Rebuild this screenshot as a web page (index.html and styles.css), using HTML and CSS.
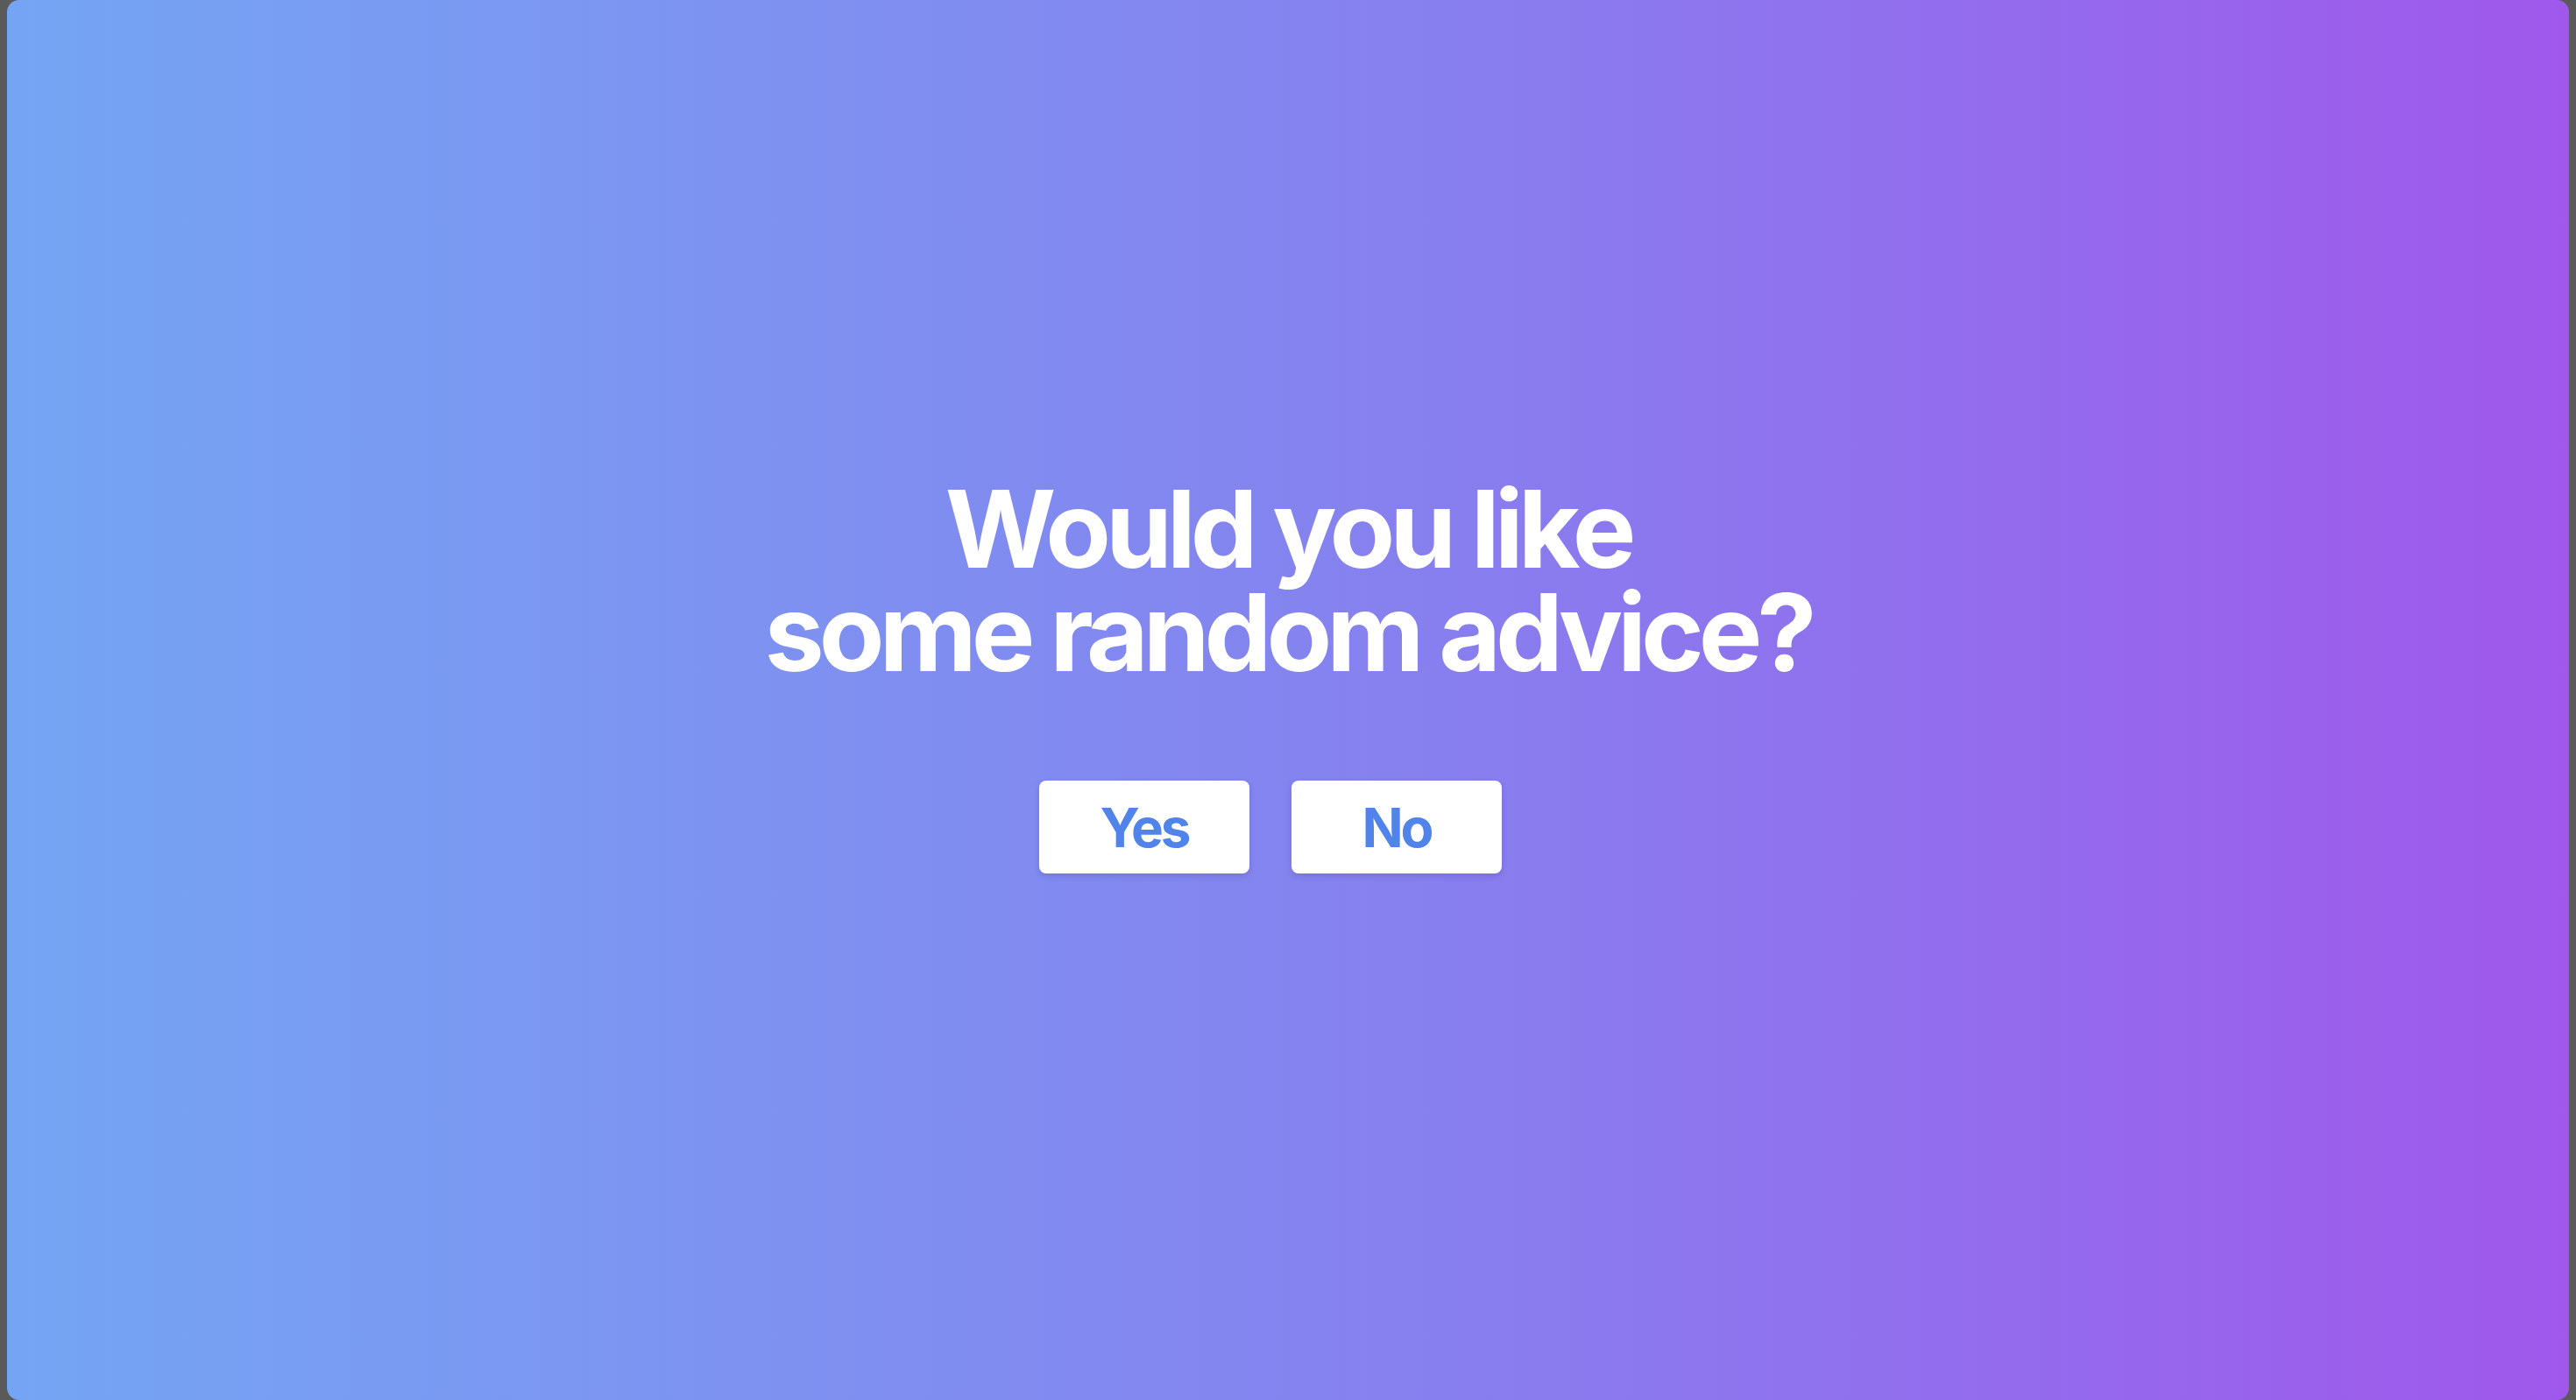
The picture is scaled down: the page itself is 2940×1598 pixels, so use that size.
FILE: index.html
```html
<!DOCTYPE html>
<html lang="en">
<head>
<meta charset="utf-8">
<title>Random advice</title>
<link rel="stylesheet" href="styles.css">
</head>
<body>
<main class="panel">
  <h1 class="question">Would you like<br>some random advice?</h1>
  <div class="actions">
    <button class="btn">Yes</button>
    <button class="btn">No</button>
  </div>
</main>
</body>
</html>
```
FILE: styles.css
```css
html, body {
  margin: 0;
  padding: 0;
  height: 100%;
}
body {
  background: #5a5a5a;
  padding: 0 8px;
  box-sizing: border-box;
  font-family: Inter, "Liberation Sans", sans-serif;
}
.panel {
  height: 1598px;
  border-radius: 14px;
  background: linear-gradient(to right, #74a5f3, #8484ef 50%, #9f58eb);
  display: flex;
  flex-direction: column;
  align-items: center;
  justify-content: center;
  padding-bottom: 56px;
  box-sizing: border-box;
}
.question {
  margin: 0;
  color: #ffffff;
  font-size: 122px;
  font-weight: 700;
  line-height: 118px;
  letter-spacing: -0.05em;
  text-align: center;
}
.actions {
  display: flex;
  gap: 48px;
  margin-top: 110px;
  margin-right: 40px;
}
.btn {
  width: 240px;
  height: 106px;
  border: none;
  border-radius: 8px;
  background: #ffffff;
  color: #5084ea;
  font-family: Inter, "Liberation Sans", sans-serif;
  font-size: 62px;
  font-weight: 700;
  letter-spacing: -0.05em;
  box-shadow: 0 3px 6px rgba(60, 40, 140, 0.2);
  cursor: pointer;
  padding: 0;
}
```
